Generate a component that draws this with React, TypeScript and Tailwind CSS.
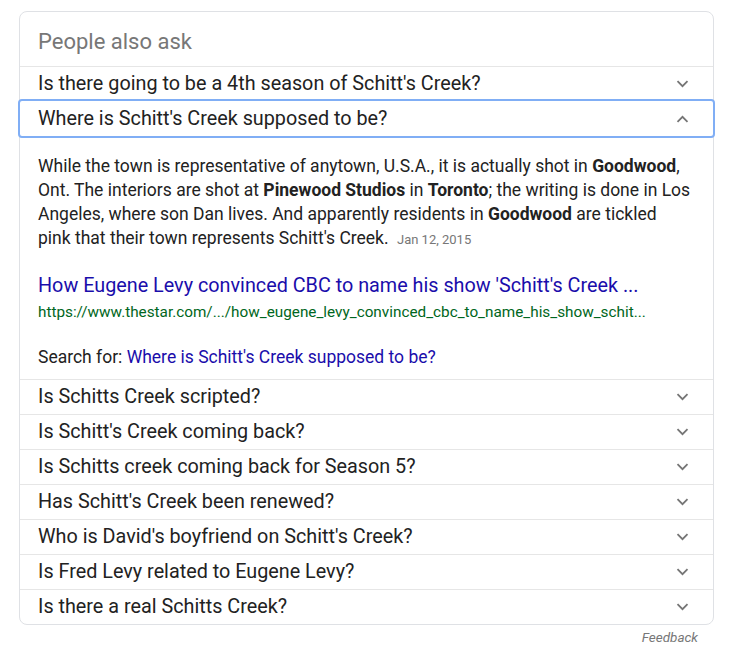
import React from 'react';

const font = { fontFamily: 'Roboto, "Liberation Sans", Arial, sans-serif' };

const questionsAfter = [
  'Is Schitts Creek scripted?',
  "Is Schitt's Creek coming back?",
  'Is Schitts creek coming back for Season 5?',
  "Has Schitt's Creek been renewed?",
  "Who is David's boyfriend on Schitt's Creek?",
  'Is Fred Levy related to Eugene Levy?',
  'Is there a real Schitts Creek?',
];

function Chevron({ up = false }: { up?: boolean }) {
  return (
    <svg width="13" height="8" viewBox="0 0 13 8" className="shrink-0">
      <path
        d={up ? 'M1.5 6.8 L6.5 1.8 L11.5 6.8' : 'M1.5 1.2 L6.5 6.2 L11.5 1.2'}
        fill="none"
        stroke="#757575"
        strokeWidth="1.8"
      />
    </svg>
  );
}

function QuestionRow({ text, open = false }: { text: string; open?: boolean }) {
  return (
    <div
      className={`flex h-[35px] items-center justify-between pl-[18px] pr-[24px] ${
        open ? 'relative z-10 outline-2 outline-[#80aef5] rounded-[2px]' : 'border-t border-[#e6e6e6]'
      }`}
    >
      <span className="text-[19.8px] leading-[24px] text-[#222]">{text}</span>
      <Chevron up={open} />
    </div>
  );
}

export default function App() {
  return (
    <div className="bg-white min-h-[657px] pt-[11px] pl-[19px]" style={font}>
      <div className="w-[695px] rounded-[8px] border border-[#dfe1e5]">
        {/* header */}
        <div className="pl-[18px] pt-[18px] pb-[12px] text-[22px] leading-[24px] text-[#777]">
          People also ask
        </div>

        <QuestionRow text="Is there going to be a 4th season of Schitt's Creek?" />
        <QuestionRow text="Where is Schitt's Creek supposed to be?" open />

        {/* expanded answer */}
        <div className="pl-[18px] pr-[8px] pt-[18px] pb-[10px]">
          <p className="text-[17.5px] leading-[24px] text-[#222] whitespace-nowrap">
            While the town is representative of anytown, U.S.A., it is actually shot in <b>Goodwood</b>,
            <br />
            Ont. The interiors are shot at <b>Pinewood Studios</b> in <b>Toronto</b>; the writing is done in Los
            <br />
            Angeles, where son Dan lives. And apparently residents in <b>Goodwood</b> are tickled
            <br />
            pink that their town represents Schitt's Creek.{' '}
            <span className="ml-[4px] text-[13px] text-[#777]">Jan 12, 2015</span>
          </p>
          <div className="mt-[21px] text-[19.8px] leading-[26px] text-[#1a0dab] whitespace-nowrap">
            How Eugene Levy convinced CBC to name his show 'Schitt's Creek ...
          </div>
          <div className="mt-[3px] text-[15.3px] leading-[20px] text-[#006621] whitespace-nowrap">
            https://www.thestar.com/.../how_eugene_levy_convinced_cbc_to_name_his_show_schit...
          </div>
          <div className="mt-[23px] text-[17.5px] leading-[24px] text-[#222]">
            Search for: <span className="text-[#1a0dab]">Where is Schitt's Creek supposed to be?</span>
          </div>
        </div>

        {questionsAfter.map((q) => (
          <QuestionRow key={q} text={q} />
        ))}
      </div>
      <div className="w-[695px] pr-[16px] pt-[4px] text-right text-[13.5px] italic leading-[16px] text-[#777]">
        Feedback
      </div>
    </div>
  );
}
